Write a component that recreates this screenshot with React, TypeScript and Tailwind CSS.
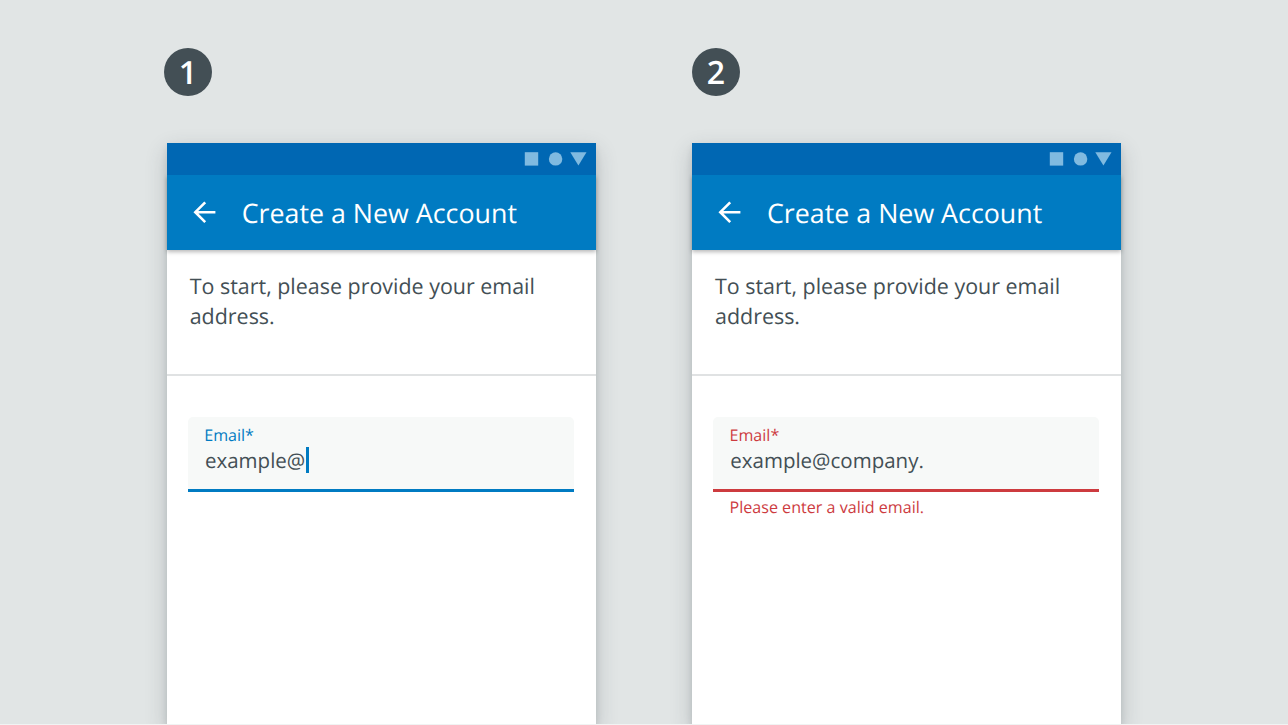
import React from "react";

type Tone = "active" | "error";

interface ScreenProps {
  step: number;
  value: string;
  tone: Tone;
  message?: string;
  badgeClass: string;
}

function StatusBar() {
  return (
    <div className="relative z-20 h-8 shrink-0 bg-[#0067b3]">
      <svg className="ml-auto block h-8 w-[80px] fill-[#80bae0]" viewBox="0 0 80 32">
        <rect x="8.8" y="9.2" width="13.4" height="13.4" />
        <circle cx="39.6" cy="15.9" r="6.7" />
        <path d="M54.3 9.2h16.2L62.4 22.6z" />
      </svg>
    </div>
  );
}

function AppBar() {
  return (
    <header className="relative z-10 flex h-[75px] shrink-0 items-center bg-[#007bc2] pl-[26px] shadow-[0_2px_4px_rgba(0,0,0,0.28)]">
      <svg className="block h-6 w-6 fill-none stroke-white stroke-[2.6]" viewBox="0 0 24 24">
        <path d="M22.4 12.2H2.6M12.2 2.3L2.3 12.2L12.2 22.1" />
      </svg>
      <h1 className="ml-[25px] whitespace-nowrap pt-[2px] text-[26.8px] leading-[36px] text-white">
        Create a New Account
      </h1>
    </header>
  );
}

function Screen({ step, value, tone, message, badgeClass }: ScreenProps) {
  const isError = tone === "error";
  return (
    <section className="flex h-[725px] w-[429px] shrink-0 flex-col pt-12">
      <div
        className={`flex h-12 w-12 shrink-0 items-center justify-center rounded-full bg-[#434f55] pt-[2px] text-[32px] font-semibold leading-[46px] text-white ${badgeClass}`}
      >
        {step}
      </div>
      <div className="mt-[46.7px] flex grow flex-col bg-white shadow-[0_8px_20px_rgba(50,60,65,0.24),0_4px_6px_rgba(50,60,65,0.12)]">
        <StatusBar />
        <AppBar />
        <p className="h-[126.5px] shrink-0 border-b-2 border-[#e0e2e3] pl-[23px] pt-[22.7px] text-[21.45px] leading-[30px] text-[#434f55]">
          To start, please provide your email
          <br />
          address.
        </p>
        <div className="ml-[21.5px] mr-[21.5px] mt-[40.5px]">
          <div
            className={`h-[75px] rounded-t-[5px] border-b-[3px] bg-[#f7f9f8] pl-[16px] pt-[8px] ${
              isError ? "border-[#cd3b3f]" : "border-[#007bc2]"
            }`}
          >
            <div
              className={`text-[16.1px] leading-[20px] ${isError ? "text-[#cd3b3f]" : "text-[#007bc2]"}`}
            >
              Email*
            </div>
            <div className="flex h-[30px] items-center pl-[0.8px] text-[20.5px] leading-[30px] text-[#434f55]">
              <span className="pt-[2px]">{value}</span>
              {!isError && <span className="ml-[0.7px] h-[26px] w-[3px] bg-[#007bc2]" />}
            </div>
          </div>
          {message && (
            <div className="pl-[16px] pt-[5px] text-[16.1px] leading-[20px] text-[#cd3b3f]">{message}</div>
          )}
        </div>
      </div>
    </section>
  );
}

export default function App() {
  return (
    <main className="flex h-[725px] w-[1288px] gap-[96.3px] overflow-hidden border-b border-[#f1f3f3] bg-[#e1e5e5] pl-[166.7px] font-['Open_Sans',sans-serif] [text-rendering:geometricPrecision]">
      <Screen step={1} value="example@" tone="active" badgeClass="-ml-[2.7px]" />
      <Screen
        step={2}
        value="example@company."
        tone="error"
        message="Please enter a valid email."
        badgeClass="ml-0"
      />
    </main>
  );
}
